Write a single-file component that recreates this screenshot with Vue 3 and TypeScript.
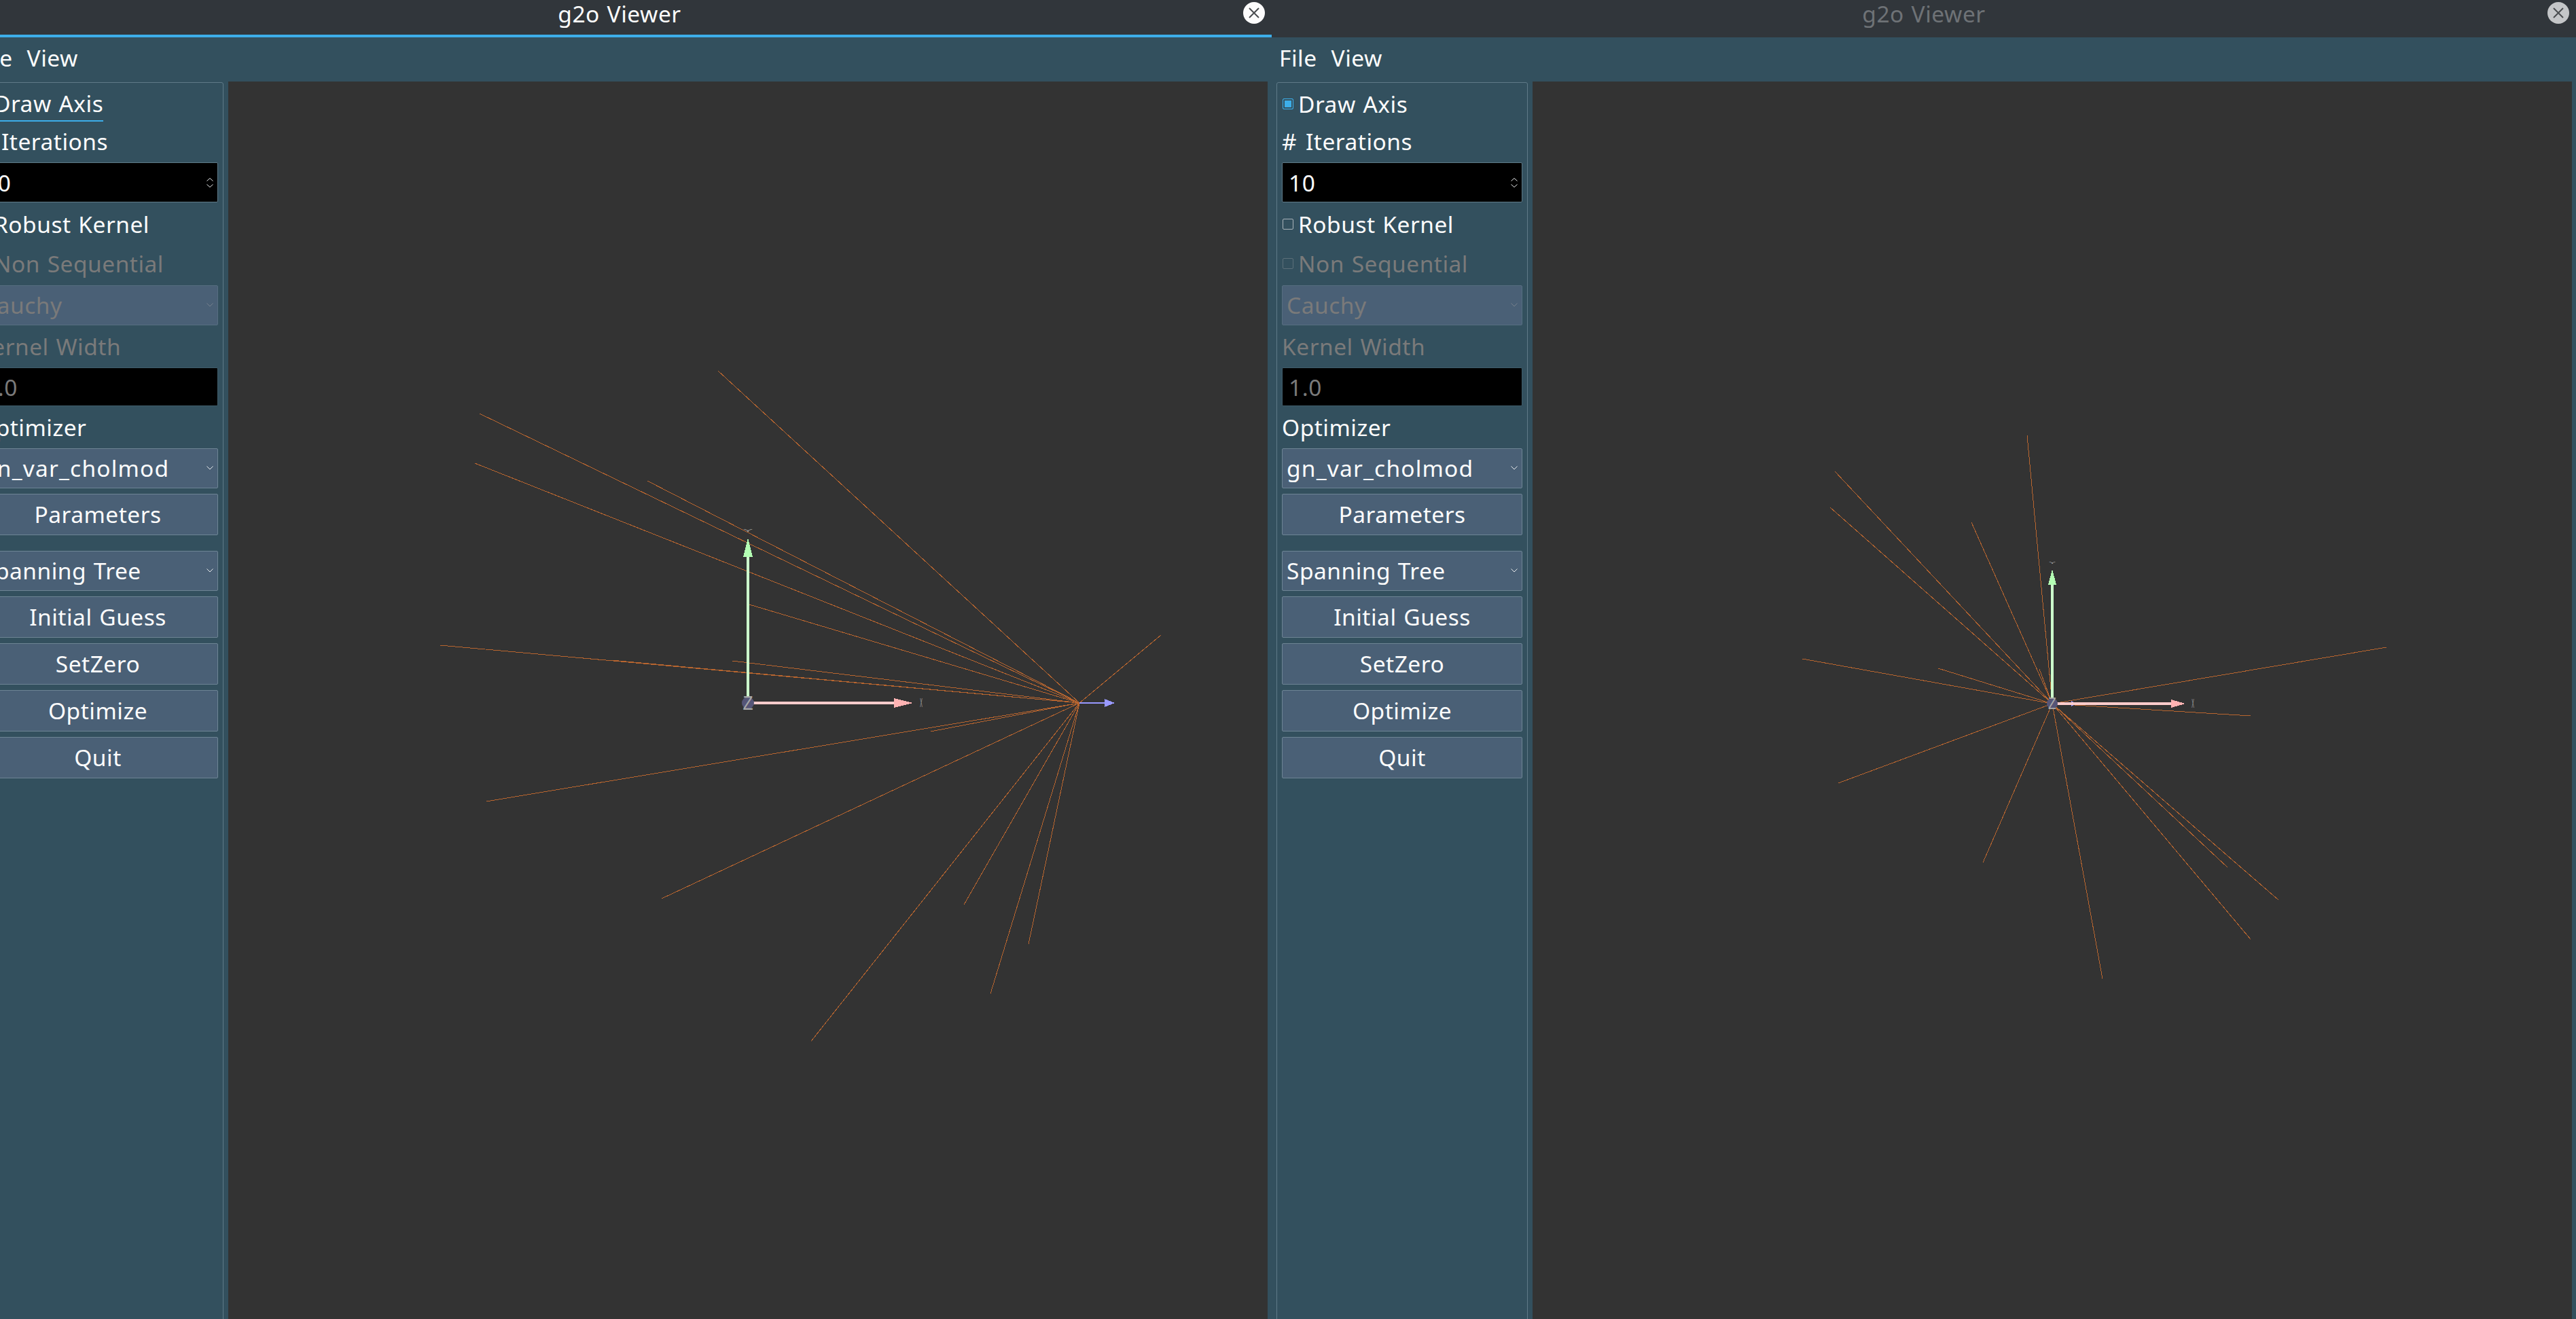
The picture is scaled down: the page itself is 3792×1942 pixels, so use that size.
<script setup lang="ts">
type Pt = [number, number];

interface Scene {
  title: string;
  active: boolean;
  glX: number; // left edge of the GL area on screen, endpoints below are screen px
  hub: Pt;
  ends: Pt[];
  origin: Pt;
  yBase: number;
  yTip: number;
  xBase: number;
  xTip: number;
  head: number;
  blue: { from: number; base: number; tip: number; half: number };
  dot: number;
  zSize: number;
  xLabel: number;
  yLabel: number;
  ySize: number;
}

const scenes: Scene[] = [
  {
    title: 'g2o Viewer',
    active: true,
    glX: 336,
    hub: [1589, 1035],
    ends: [
      [1057, 546], [706, 609], [699, 682], [953, 708], [1103, 890],
      [648, 950], [900, 972], [1078, 973], [716, 1180], [1370, 1077],
      [974, 1323], [1194, 1533], [1419, 1332], [1458, 1463], [1514, 1390],
      [1709, 935],
    ],
    origin: [1101, 1035],
    yBase: 820,
    yTip: 792,
    xBase: 1316,
    xTip: 1344,
    head: 7,
    blue: { from: 1589, base: 1626, tip: 1641, half: 6 },
    dot: 9,
    zSize: 29,
    xLabel: 1356,
    yLabel: 783,
    ySize: 22,
  },
  {
    title: 'g2o Viewer',
    active: false,
    glX: 2256,
    hub: [3021, 1036],
    ends: [
      [2984, 641], [2701, 694], [2694, 747], [2902, 769], [3002, 985],
      [2653, 970], [2853, 984], [2706, 1153], [2919, 1270], [3095, 1441],
      [3313, 1383], [3354, 1325], [3279, 1277], [3513, 953], [3313, 1054],
    ],
    origin: [3021, 1036],
    yBase: 861,
    yTip: 838,
    xBase: 3196,
    xTip: 3217,
    head: 6,
    blue: { from: 3021, base: 3049, tip: 3057, half: 4 },
    dot: 8,
    zSize: 23,
    xLabel: 3228,
    yLabel: 830,
    ySize: 16,
  },
];

const glTop = 120;

const lx = (s: Scene, x: number) => x - s.glX;
const ly = (y: number) => y - glTop;

function arrowUp(s: Scene) {
  const x = lx(s, s.origin[0]);
  return `${x},${ly(s.yTip)} ${x - s.head},${ly(s.yBase)} ${x + s.head},${ly(s.yBase)}`;
}

function arrowRight(s: Scene, base: number, tip: number, half: number) {
  const y = ly(s.origin[1]);
  return `${lx(s, tip)},${y} ${lx(s, base)},${y - half} ${lx(s, base)},${y + half}`;
}
</script>

<template>
  <div class="desktop">
    <section v-for="(s, i) in scenes" :key="i" class="window" :class="{ first: i === 0 }">
      <header class="titlebar" :class="{ active: s.active }">
        <span class="title">{{ s.title }}</span>
        <span class="close">
          <svg width="32" height="32" viewBox="0 0 32 32">
            <path d="M9 9 L23 23 M23 9 L9 23" stroke="#4a4d50" stroke-width="2" fill="none" />
          </svg>
        </span>
      </header>

      <nav class="menubar">
        <span>File</span>
        <span>View</span>
      </nav>

      <div class="body">
        <aside class="panel">
          <div class="group">
            <label class="check" :class="{ focus: s.active }">
              <i class="box on"></i><span class="check-text">Draw Axis</span>
            </label>
            <div class="label"><span class="hash">#</span>Iterations</div>
            <div class="field spin">
              <span>10</span>
              <svg class="arrows" width="12" height="16" viewBox="0 0 12 16">
                <path d="M1.5 5.5 L6 1.5 L10.5 5.5 M1.5 10.5 L6 14.5 L10.5 10.5" stroke="#e8eaec" fill="none" />
              </svg>
            </div>
            <label class="check">
              <i class="box"></i><span class="check-text">Robust Kernel</span>
            </label>
            <label class="check off nudge">
              <i class="box"></i><span class="check-text">Non Sequential</span>
            </label>
            <div class="combo off">
              <span>Cauchy</span>
              <svg class="arrows" width="12" height="8" viewBox="0 0 12 8">
                <path d="M1.5 1.5 L6 6 L10.5 1.5" stroke="#75808c" fill="none" />
              </svg>
            </div>
            <div class="label off">Kernel Width</div>
            <div class="field line off"><span>1.0</span></div>
            <div class="label">Optimizer</div>
            <div class="combo">
              <span class="stretch">gn_var_cholmod</span>
              <svg class="arrows" width="12" height="8" viewBox="0 0 12 8">
                <path d="M1.5 1.5 L6 6 L10.5 1.5" stroke="#e8eaec" fill="none" />
              </svg>
            </div>
            <button class="btn">Parameters</button>
            <div class="combo spaced">
              <span>Spanning Tree</span>
              <svg class="arrows" width="12" height="8" viewBox="0 0 12 8">
                <path d="M1.5 1.5 L6 6 L10.5 1.5" stroke="#e8eaec" fill="none" />
              </svg>
            </div>
            <button class="btn">Initial Guess</button>
            <button class="btn">SetZero</button>
            <button class="btn">Optimize</button>
            <button class="btn">Quit</button>
          </div>
        </aside>

        <div class="gl">
          <svg class="scene" width="1530" height="1822">
            <g stroke="#b8652f" stroke-width="1" shape-rendering="crispEdges">
              <line
                v-for="(e, j) in s.ends"
                :key="j"
                :x1="lx(s, s.hub[0])"
                :y1="ly(s.hub[1])"
                :x2="lx(s, e[0])"
                :y2="ly(e[1])"
              />
            </g>
            <g shape-rendering="crispEdges">
              <line
                :x1="lx(s, s.blue.from)"
                :y1="ly(s.origin[1])"
                :x2="lx(s, s.blue.base)"
                :y2="ly(s.origin[1])"
                stroke="#9999ff"
                stroke-width="2"
              />
              <polygon :points="arrowRight(s, s.blue.base, s.blue.tip, s.blue.half)" fill="#9999ff" />
              <line
                :x1="lx(s, s.origin[0])"
                :y1="ly(s.origin[1])"
                :x2="lx(s, s.origin[0])"
                :y2="ly(s.yBase)"
                stroke="#ccffcc"
                stroke-width="4"
              />
              <polygon :points="arrowUp(s)" fill="#b3ffb3" />
              <line
                :x1="lx(s, s.origin[0])"
                :y1="ly(s.origin[1])"
                :x2="lx(s, s.xBase)"
                :y2="ly(s.origin[1])"
                stroke="#ffcccc"
                stroke-width="4"
              />
              <polygon :points="arrowRight(s, s.xBase, s.xTip, s.head)" fill="#ffb3b3" />
            </g>
            <circle :cx="lx(s, s.origin[0])" :cy="ly(s.origin[1])" :r="s.dot" fill="#555577" />
            <!-- axis letters are seen nearly edge-on in the GL view -->
            <text
              class="axis-label"
              :font-size="s.zSize"
              :transform="`translate(${lx(s, s.origin[0])} ${ly(s.origin[1]) + s.zSize * 0.36}) scale(.85 1)`"
            >Z</text>
            <text
              class="axis-label"
              font-size="18"
              :transform="`translate(${lx(s, s.xLabel)} ${ly(s.origin[1]) + 6}) scale(.3 1)`"
            >X</text>
            <text
              class="axis-label"
              :font-size="s.ySize"
              :transform="`translate(${lx(s, s.origin[0])} ${ly(s.yLabel)}) scale(1 .22)`"
            >Y</text>
          </svg>
        </div>
      </div>
    </section>
  </div>
</template>

<style scoped>
  .desktop {
    display: flex;
    width: 3792px;
    height: 1942px;
    overflow: hidden;
    font-family: 'Noto Sans', sans-serif;
    font-size: 33.5px;
    letter-spacing: 0.5px;
    word-spacing: 1.5px;
    color: #fcfcfc;
    background: #33505e;
  }

  .window {
    flex: 0 0 1920px;
    display: flex;
    flex-direction: column;
    height: 1942px;
    overflow: hidden;
    background: #33505e;
  }

  .window.first {
    margin-left: -48px;
  }

  .titlebar {
    position: relative;
    flex: 0 0 55px;
    box-sizing: border-box;
    display: flex;
    justify-content: center;
    background: #31363b;
    color: #6e7276;
    line-height: 40px;
  }

  .titlebar.active {
    border-bottom: 4px solid #3daee9;
    color: #fcfcfc;
  }

  .close {
    position: absolute;
    top: 3px;
    right: 10px;
    width: 32px;
    height: 32px;
    border-radius: 50%;
    background: #c4c6c8;
  }

  .titlebar.active .close {
    background: #fcfcfc;
  }

  .close svg {
    display: block;
  }

  .menubar {
    flex: 0 0 65px;
    display: flex;
    align-items: center;
    gap: 21px;
    padding-left: 11px;
    padding-bottom: 6px;
    box-sizing: border-box;
  }

  .body {
    flex: 1;
    display: flex;
    min-height: 0;
    padding-right: 6px;
  }

  .panel {
    flex: 0 0 384px;
    box-sizing: border-box;
    display: flex;
    padding: 1px 7px 0;
  }

  .group {
    flex: 1;
    box-sizing: border-box;
    display: flex;
    flex-direction: column;
    gap: 8px;
    height: calc(100% + 6px);
    padding: 7px 7px 0;
    border: 1px solid #5f7a88;
    border-radius: 3px;
  }

  .check {
    position: relative;
    flex: 0 0 48px;
    display: flex;
    align-items: center;
    gap: 7px;
    padding-left: 1px;
  }

  .check.nudge {
    margin-top: 2px;
  }

  .check-text {
    line-height: 48px;
  }

  .check.focus .check-text {
    box-shadow: 0 2px 0 #3daee9;
    line-height: 46px;
    height: 48px;
    box-sizing: border-box;
  }

  .box {
    flex: 0 0 16px;
    box-sizing: border-box;
    width: 16px;
    height: 16px;
    border: 1px solid #aab4ba;
    border-radius: 2px;
  }

  .box.on {
    border-color: #3daee9;
    background: #3daee9;
    box-shadow: inset 0 0 0 2px #33505e;
  }

  .off {
    color: #7a7a7a;
  }

  .check.off .box {
    border-color: #5c6f79;
  }

  .label {
    flex: 0 0 46px;
    line-height: 46px;
  }

  .hash {
    display: inline-block;
    width: 35px;
  }

  .stretch {
    letter-spacing: 1.2px;
  }

  .field {
    box-sizing: border-box;
    display: flex;
    align-items: center;
    justify-content: space-between;
    padding: 0 5px 0 9px;
    background: #000;
    border: 1px solid #5f7a88;
    border-radius: 2px;
  }

  .spin {
    flex: 0 0 59px;
  }

  .line {
    flex: 0 0 57px;
    border-color: #3f5c6a;
  }

  .combo {
    flex: 0 0 59px;
    box-sizing: border-box;
    display: flex;
    align-items: center;
    justify-content: space-between;
    padding: 0 5px 2px 6px;
    background: #4a6076;
    border: 1px solid #6d8494;
    border-radius: 2px;
  }

  .combo.off {
    border-color: #566e80;
  }

  .combo.spaced {
    margin-top: 15px;
  }

  .btn {
    flex: 0 0 61px;
    box-sizing: border-box;
    padding: 0 0 2px;
    background: #4a6076;
    border: 1px solid #6d8494;
    border-radius: 2px;
    color: #fcfcfc;
    font: inherit;
    letter-spacing: inherit;
    word-spacing: inherit;
    text-align: center;
  }

  .gl {
    flex: 1;
    min-width: 0;
    background: #333333;
    overflow: hidden;
  }

  .scene {
    display: block;
  }

  .axis-label {
    font-family: 'Liberation Sans', sans-serif;
    font-weight: 400;
    letter-spacing: 0;
    fill: #a8a8a8;
    text-anchor: middle;
  }
</style>
